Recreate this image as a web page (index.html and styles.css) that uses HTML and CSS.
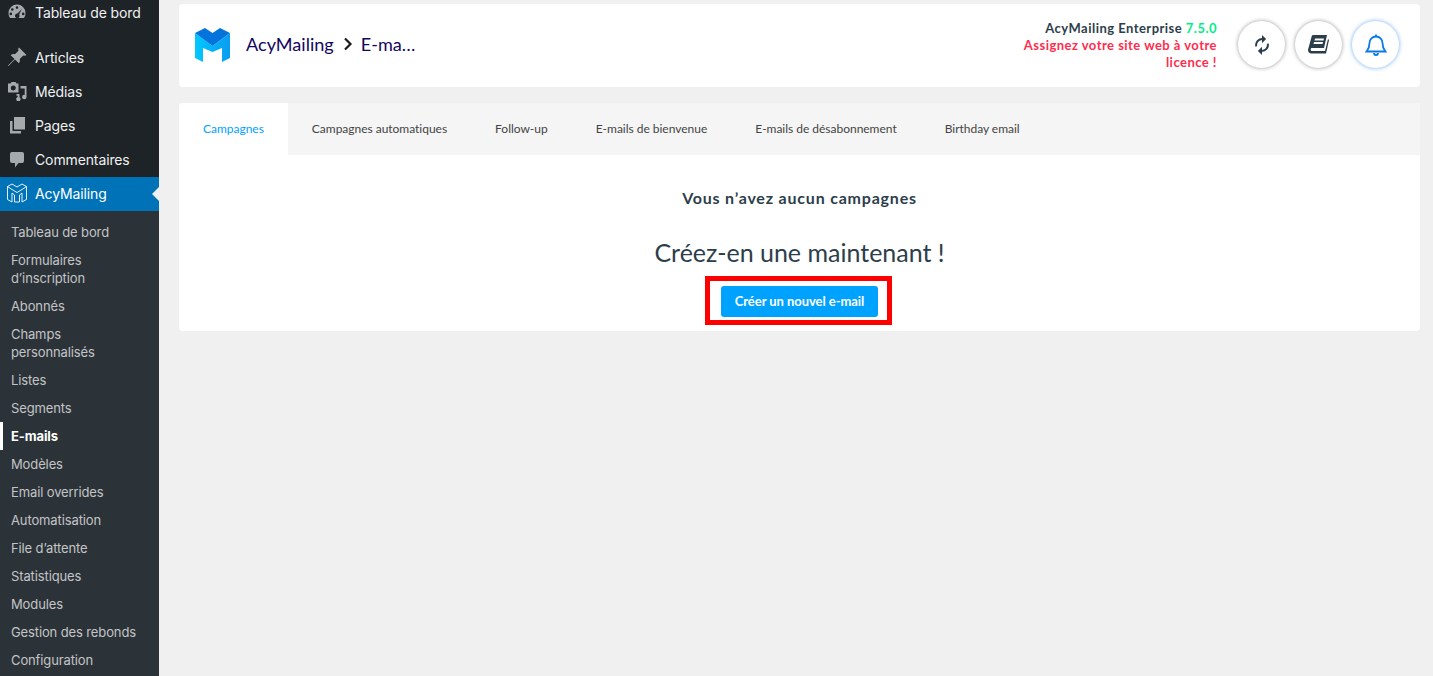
FILE: index.html
```html
<!DOCTYPE html>
<html lang="fr">
<head>
    <meta charset="UTF-8">
    <meta name="viewport" content="width=device-width, initial-scale=1.0">
    <title>AcyMailing - E-mails</title>
    <link rel="stylesheet" href="styles.css">
</head>
<body>
    <div class="layout">
        <nav class="sidebar">
            <a class="menu-item menu-first" href="#">
                <svg class="menu-icon" viewBox="0 0 20 20"><path fill-rule="evenodd" d="M10 2.500a8.500 8.500 0 0 0-8.500 8.500c0 1.900.6 3.700 1.600 5h13.800c1-1.300 1.600-3.100 1.600-5A8.500 8.500 0 0 0 10 2.500zm0 1.800a1.300 1.300 0 1 1 0 2.600 1.300 1.300 0 0 1 0-2.600zM5.300 6.200a1.300 1.300 0 1 1 0 2.600 1.300 1.300 0 0 1 0-2.600zm9.700.6-2.900 5.600a2.300 2.300 0 1 1-1.600-.9zM3.800 10.600a1.300 1.300 0 1 1 0 2.600 1.300 1.300 0 0 1 0-2.600zm12.400 0a1.300 1.300 0 1 1 0 2.600 1.300 1.300 0 0 1 0-2.600z"/></svg>
                <span>Tableau de bord</span>
            </a>
            <div class="menu-group">
                <a class="menu-item" href="#">
                    <svg class="menu-icon" viewBox="0 0 20 20"><path d="M12 .5 19.500 8c-.9.900-2.100 1-3.200.5l-3.600 3.600c.6 1.500.2 3.100-.9 4.200L8 12.500 1.500 19 1 18.500 7.500 12 3.700 8.200c1.100-1.100 2.700-1.500 4.200-.9l3.600-3.600C11 2.600 11.100 1.400 12 .5z"/></svg>
                    <span>Articles</span>
                </a>
                <a class="menu-item" href="#">
                    <svg class="menu-icon" viewBox="0 0 20 20"><path fill-rule="evenodd" d="M1 2.500h2.500L4.500 1h4l1 1.500H11.500v9H1zm5.300 2a2.500 2.500 0 1 0 0 5 2.500 2.500 0 0 0 0-5z"/><path d="M13.500 5H19.500v11a2.200 2.200 0 1 1-1.800-2.100V7.500h-4.200zM9.500 13h3v3.200a2.200 2.200 0 1 1-1.800-.2v-1.300H9.500z"/></svg>
                    <span>Médias</span>
                </a>
                <a class="menu-item" href="#">
                    <svg class="menu-icon" viewBox="0 0 20 20"><path d="M7 2h11v12.500H7zM3 6h2.500v10H14v2.500H3z"/></svg>
                    <span>Pages</span>
                </a>
                <a class="menu-item" href="#">
                    <svg class="menu-icon" viewBox="0 0 20 20"><path d="M5 3h10a2 2 0 0 1 2 2v7a2 2 0 0 1-2 2h-3.500L8 18.500V14H5a2 2 0 0 1-2-2V5a2 2 0 0 1 2-2z"/></svg>
                    <span>Commentaires</span>
                </a>
                <a class="menu-item menu-current" href="#">
                    <svg class="menu-icon acy-icon" viewBox="0 0 22 22"><path d="M1.500 4.500 6 2l5 3 5-3 4.500 2.500v13L16 20v-9l-2.500 2v7h-5v-7L6 11v9l-4.500-2.500zM1.500 4.500 6 7.500l5 3 5-3 4.500-3"/></svg>
                    <span>AcyMailing</span>
                </a>
            </div>
            <ul class="submenu">
                <li><a href="#">Tableau de bord</a></li>
                <li><a href="#">Formulaires d’inscription</a></li>
                <li><a href="#">Abonnés</a></li>
                <li><a href="#">Champs personnalisés</a></li>
                <li><a href="#">Listes</a></li>
                <li><a href="#">Segments</a></li>
                <li class="submenu-current"><a href="#">E-mails</a></li>
                <li><a href="#">Modèles</a></li>
                <li><a href="#">Email overrides</a></li>
                <li><a href="#">Automatisation</a></li>
                <li><a href="#">File d’attente</a></li>
                <li><a href="#">Statistiques</a></li>
                <li><a href="#">Modules</a></li>
                <li><a href="#">Gestion des rebonds</a></li>
                <li><a href="#">Configuration</a></li>
            </ul>
        </nav>

        <main class="content">
            <header class="topbar">
                <div class="brand">
                    <svg class="brand-logo" viewBox="0 0 35 34">
                        <defs>
                            <linearGradient id="acyBody" x1="0" y1="0" x2="1" y2="0">
                                <stop offset="0" stop-color="#00c8ff"/>
                                <stop offset="1" stop-color="#0a9cf0"/>
                            </linearGradient>
                        </defs>
                        <path fill="url(#acyBody)" d="M0 5 17.500 18 35 5v25l-8 4V20l-9.500 4L8 20v14l-8-4z"/>
                        <path fill="#0573dc" d="M0 5 10 0l7.500 5L25 0l10 5-17.500 13z"/>
                    </svg>
                    <span class="crumb">AcyMailing</span>
                    <svg class="crumb-sep" viewBox="0 0 10 14"><path d="M2 1.500 7.500 7 2 12.500" /></svg>
                    <span class="crumb">E-ma…</span>
                </div>
                <div class="version">
                    <div>AcyMailing Enterprise <span class="version-num">7.5.0</span></div>
                    <div class="licence">Assignez votre site web à votre licence !</div>
                </div>
                <div class="round-btns">
                    <button class="round-btn" type="button">
                        <svg viewBox="0 0 24 24" class="sync"><path d="M5.500 13.500C5 9 8 5.500 12.500 5.500M18.500 10.500C19 15 16 18.500 11.500 18.500"/><path class="solid" d="M12 1l4.500 4.500L12 10zM12 14l-4.500 4.500L12 23z"/></svg>
                    </button>
                    <button class="round-btn" type="button">
                        <svg viewBox="0 0 21 19" class="book"><path fill-rule="evenodd" d="M5 0h14l-3 13H4c-1.500 0-2 2-.5 3H17L20 4l1 1-3 13.500H3C0 18.500-.5 15 .5 13l3-11C3.800.8 4.200 0 5 0zm2 3.500-.5 2h9l.5-2zM6 7l-.5 2h9l.5-2z"/></svg>
                    </button>
                    <button class="round-btn round-btn-notif" type="button">
                        <svg viewBox="0 0 24 24" class="bell"><path d="M12 3.500a6.500 6.500 0 0 0-6.500 6.500c0 5-1.500 6.500-3 8.500h19c-1.500-2-3-3.500-3-8.500A6.500 6.500 0 0 0 12 3.500zM10 20c0 1.200 1 2 2 2s2-.8 2-2M12 1.500v2"/></svg>
                    </button>
                </div>
            </header>

            <section class="panel">
                <div class="tabs">
                    <a class="tab tab-active" href="#">Campagnes</a>
                    <a class="tab" href="#">Campagnes automatiques</a>
                    <a class="tab" href="#">Follow-up</a>
                    <a class="tab" href="#">E-mails de bienvenue</a>
                    <a class="tab" href="#">E-mails de désabonnement</a>
                    <a class="tab" href="#">Birthday email</a>
                </div>
                <div class="empty">
                    <h2 class="empty-title">Vous n’avez aucun campagnes</h2>
                    <h1 class="empty-cta">Créez-en une maintenant !</h1>
                    <div class="highlight">
                        <button class="primary-btn" type="button">Créer un nouvel e-mail</button>
                    </div>
                </div>
            </section>
        </main>
    </div>
</body>
</html>
```

FILE: styles.css
```css
html, body {
    margin: 0;
    padding: 0;
    height: 100%;
    overflow: hidden;
}
body {
    font-family: Lato, Arial, sans-serif;
    background-color: #f0f0f0;
    color: #2d3e4b;
}
a {
    text-decoration: none;
}
.layout {
    display: flex;
    height: 676px;
}

/* left menu */
.sidebar {
    width: 159px;
    flex-shrink: 0;
    background-color: #1d2327;
    font-family: Inter, Arial, sans-serif;
    letter-spacing: -0.12px;
    overflow: hidden;
}
.menu-item {
    display: flex;
    align-items: center;
    box-sizing: border-box;
    height: 34px;
    padding: 0 0 2px 7px;
    color: #f0f0f1;
    font-size: 14px;
}
.menu-first {
    height: 24px;
    padding-bottom: 0;
}
.menu-group {
    margin-top: 17px;
}
.menu-icon {
    width: 20px;
    height: 20px;
    margin-right: 8px;
    fill: #a7aaad;
    flex-shrink: 0;
}
.menu-current {
    position: relative;
    background-color: #0073b8;
    color: #fff;
}
.menu-current::after {
    content: "";
    position: absolute;
    right: 0;
    top: 10px;
    border: 7px solid transparent;
    border-right-color: #f0f0f0;
    border-left-width: 0;
}
.acy-icon {
    width: 22px;
    height: 22px;
    margin-left: -1px;
    margin-right: 7px;
    fill: none;
    stroke: #fff;
    stroke-width: 0.9;
}
.submenu {
    list-style: none;
    margin: 0;
    padding: 7px 0;
    background-color: #2c3338;
    font-size: 13px;
    line-height: 18px;
}
.submenu a {
    display: block;
    padding: 5px 11px;
    color: #c3c4c7;
}
.submenu-current {
    box-shadow: inset 3px 0 0 #fff;
}
.submenu-current a {
    color: #fff;
    font-weight: 700;
}

/* main column */
.content {
    flex: 1;
    padding: 4px 13px 0 20px;
    min-width: 0;
}
.topbar {
    display: flex;
    align-items: center;
    height: 83px;
    padding: 0 21px 0 16px;
    background-color: #fff;
    border-radius: 4px;
}
.brand {
    display: flex;
    align-items: center;
    flex: 1;
    color: #14055f;
    font-size: 18.1px;
}
.brand-logo {
    width: 35px;
    height: 34px;
    margin: 0 16px 1px 0;
}
.crumb {
    margin-bottom: 4px;
}
.crumb-sep {
    width: 10px;
    height: 14px;
    margin: 0 8px 4px 9px;
    fill: none;
    stroke: #1c1c1c;
    stroke-width: 2.2;
}
.version {
    width: 210px;
    margin-right: 21px;
    text-align: right;
    font-size: 13px;
    line-height: 17px;
    font-weight: 700;
    letter-spacing: 0.47px;
}
.version-num {
    color: #00ee8a;
}
.licence {
    color: #ff2d4d;
}
.round-btns {
    display: flex;
    gap: 10px;
    margin-top: -2px;
}
.round-btn {
    display: flex;
    align-items: center;
    justify-content: center;
    width: 47px;
    height: 47px;
    padding: 0;
    background-color: #fff;
    border: none;
    border-radius: 50%;
    box-shadow: 0 0 4px rgba(0, 0, 0, 0.4);
}
.round-btn svg {
    fill: #2d3e4b;
}
.round-btn .sync {
    width: 22px;
    height: 22px;
    fill: none;
    stroke: #2d3e4b;
    stroke-width: 2.2;
}
.round-btn .sync .solid {
    fill: #2d3e4b;
    stroke: none;
}
.round-btn .book {
    width: 21px;
    height: 19px;
}
.round-btn-notif {
    box-shadow: 0 0 4px rgba(10, 120, 230, 0.6);
}
.round-btn .bell {
    width: 24px;
    height: 24px;
    fill: none;
    stroke: #0a78e6;
    stroke-width: 1.8;
}

/* campaigns panel */
.panel {
    margin-top: 16px;
    background-color: #fff;
    border-radius: 4px;
    overflow: hidden;
}
.tabs {
    display: flex;
    height: 52px;
    background-color: #f5f5f5;
}
.tab {
    display: flex;
    align-items: center;
    padding: 0 24px 2px;
    color: #444;
    font-size: 12px;
    letter-spacing: -0.02px;
}
.tab-active {
    background-color: #fff;
    color: #00a2ff;
}
.empty {
    display: flex;
    flex-direction: column;
    align-items: center;
    padding-top: 33px;
    height: 143px;
}
.empty-title {
    margin: 0;
    font-size: 16px;
    line-height: 20px;
    font-weight: 700;
    letter-spacing: 0.8px;
}
.empty-cta {
    margin: 29px 0 0;
    font-size: 25px;
    line-height: 30px;
    font-weight: 400;
}
.highlight {
    margin: 9px 2px 0 0;
    padding: 5px 9px 3px 11px;
    border: 5px solid #f00;
}
.primary-btn {
    display: block;
    width: 157px;
    height: 31px;
    padding: 0 0 2px;
    background-color: #00a2ff;
    color: #fff;
    border: none;
    border-radius: 3px;
    font-family: Lato, Arial, sans-serif;
    font-size: 13px;
    font-weight: 700;
    letter-spacing: -0.05px;
}
```
